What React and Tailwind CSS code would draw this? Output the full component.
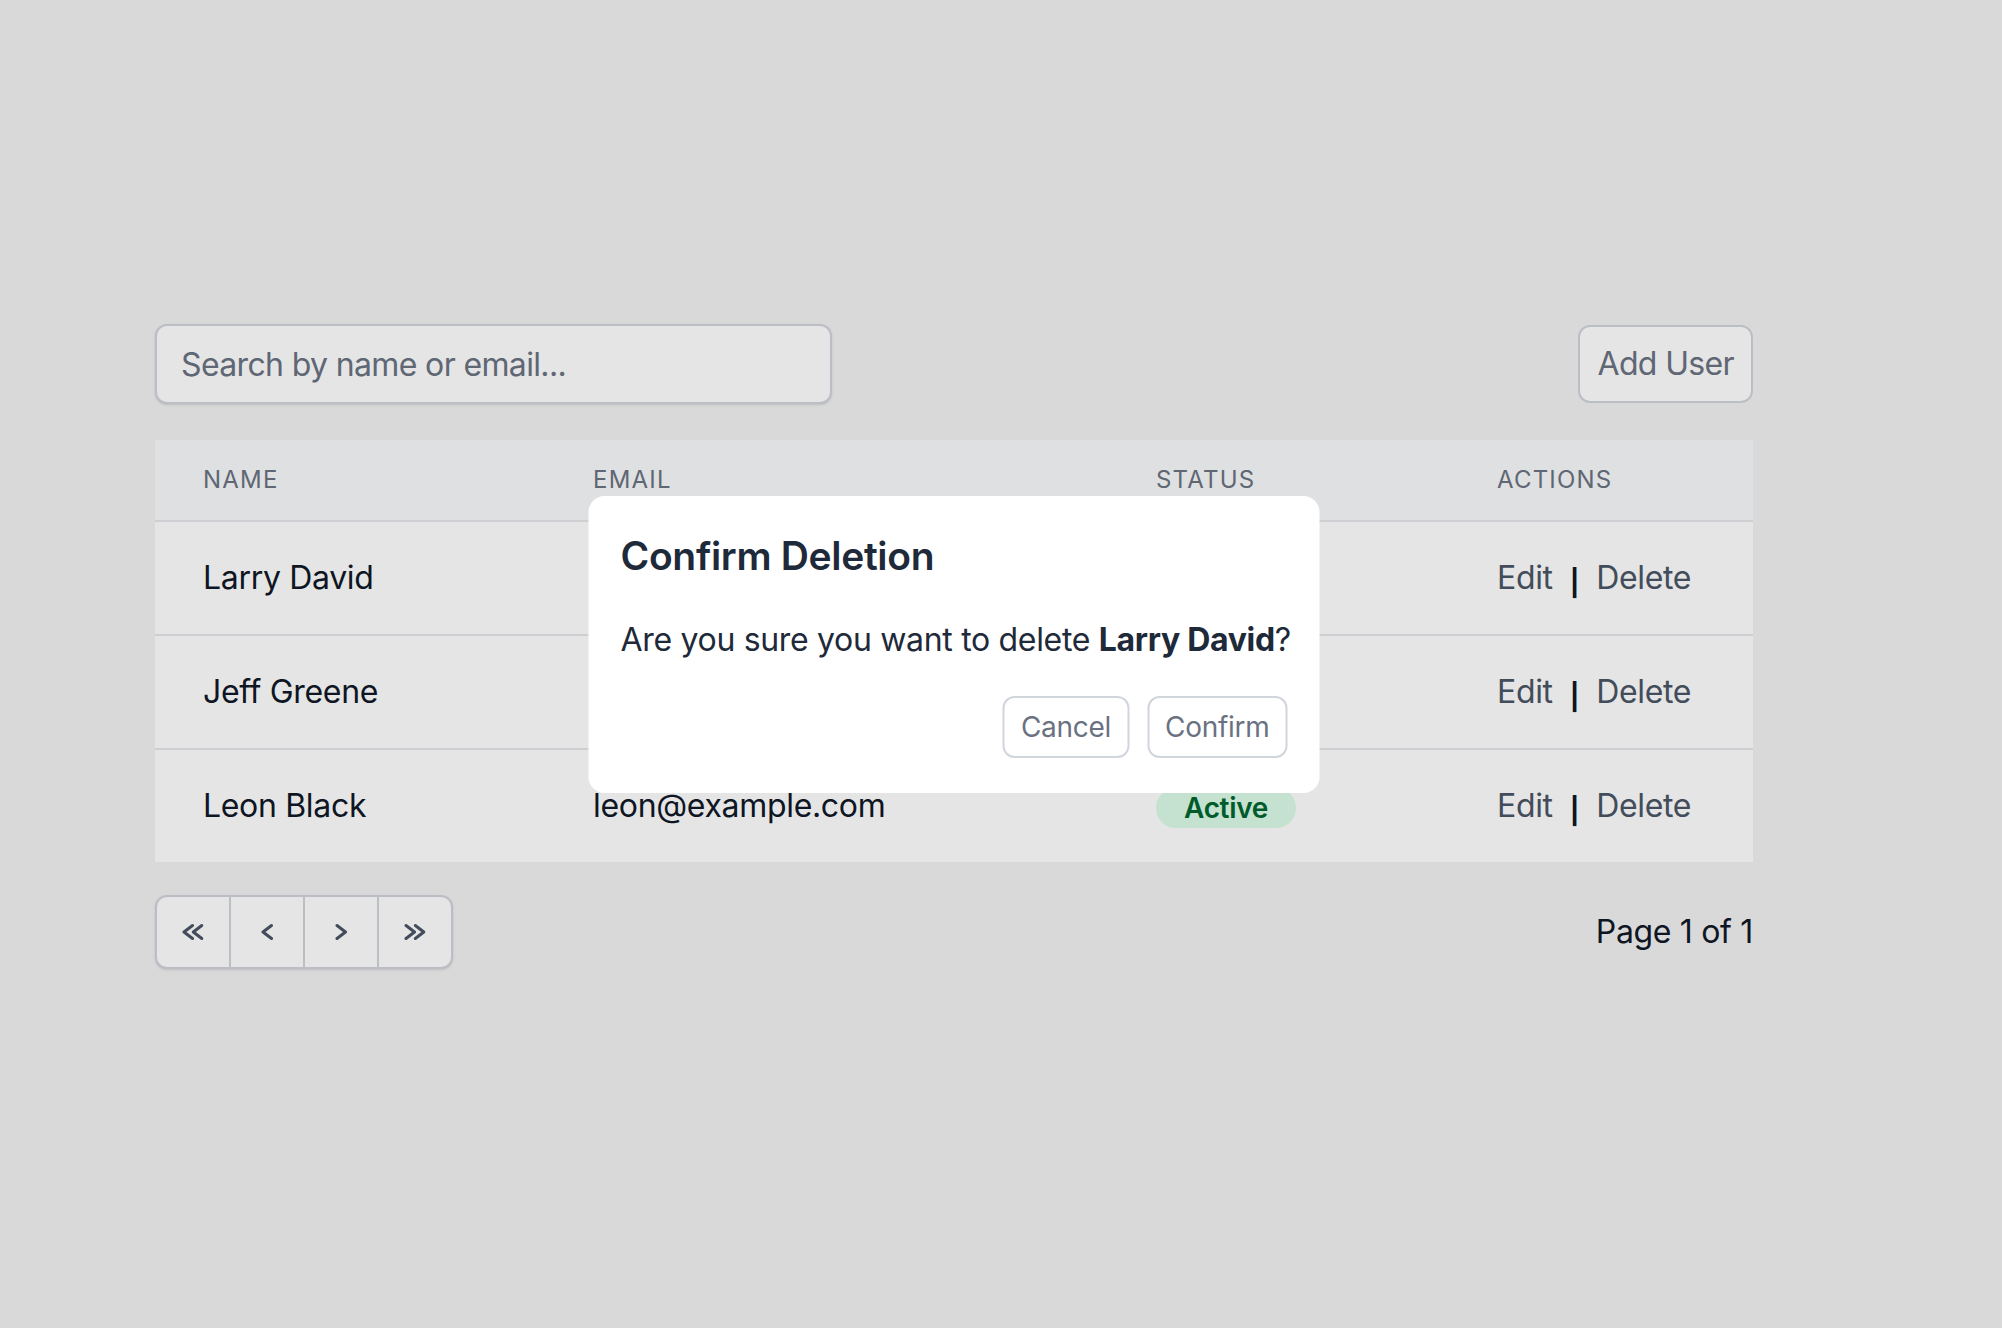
import React from "react";

function Chevron({ dir = "left", double = false }) {
  if (double) {
    const d =
      dir === "left"
        ? ["M10.5 2.5 L2 9 L10.5 15.5", "M19.8 2.5 L11.3 9 L19.8 15.5"]
        : ["M11.3 2.5 L19.8 9 L11.3 15.5", "M2 2.5 L10.5 9 L2 15.5"];
    return (
      <svg width="22" height="18" viewBox="0 0 22 18" fill="none" stroke="currentColor" strokeWidth="3" strokeLinecap="round" strokeLinejoin="round">
        <path d={d[0]} />
        <path d={d[1]} />
      </svg>
    );
  }
  const d = dir === "left" ? "M10.5 2.5 L2 9 L10.5 15.5" : "M2 2.5 L10.5 9 L2 15.5";
  return (
    <svg width="13" height="18" viewBox="0 0 13 18" fill="none" stroke="currentColor" strokeWidth="3" strokeLinecap="round" strokeLinejoin="round">
      <path d={d} />
    </svg>
  );
}

const users = [
  { name: "Larry David", email: "larry@example.com", status: "Active" },
  { name: "Jeff Greene", email: "jeff@example.com", status: "Active" },
  { name: "Leon Black", email: "leon@example.com", status: "Active" },
];

export default function App() {
  return (
    <div className="min-h-screen w-full bg-[#f2f2f2] font-['Inter',sans-serif] tracking-[-0.02em] text-gray-900">
      <div className="relative ml-[155px] w-[1598px] pt-[324px]">
        {/* toolbar */}
        <div className="mb-[36px] flex items-center justify-between">
          <input
            type="text"
            placeholder="Search by name or email..."
            className="h-[80px] w-[677px] rounded-[12px] border-2 border-gray-300 bg-white px-[24px] text-[32px] leading-[48px] tracking-[-0.02em] text-gray-900 shadow-sm outline-none placeholder:text-gray-500"
          />
          <button className="rounded-[12px] border-2 border-gray-300 bg-white px-[17px] py-[13px] text-[32px] leading-[48px] tracking-[-0.02em] text-gray-500">
            Add User
          </button>
        </div>

        {/* table */}
        <table className="w-full table-fixed border-collapse bg-white">
          <colgroup>
            <col className="w-[390px]" />
            <col className="w-[563px]" />
            <col className="w-[341px]" />
            <col className="w-[304px]" />
          </colgroup>
          <thead className="bg-gray-50">
            <tr className="border-b-2 border-gray-200">
              {["Name", "Email", "Status", "Actions"].map((h) => (
                <th
                  key={h}
                  className="px-[48px] py-[24px] text-left text-[24px] font-normal uppercase leading-[32px] tracking-wider text-gray-500"
                >
                  {h}
                </th>
              ))}
            </tr>
          </thead>
          <tbody>
            {users.map((u, i) => (
              <tr key={u.name} className={i < users.length - 1 ? "border-b-2 border-gray-200" : ""}>
                <td className="px-[48px] py-[32px] text-[32px] leading-[48px] text-gray-900">{u.name}</td>
                <td className="px-[48px] py-[32px] text-[32px] leading-[48px] text-gray-900">{u.email}</td>
                <td className="px-[48px] py-[32px] text-[32px] leading-[48px]">
                  <span className="inline-block rounded-full bg-green-100 px-[28px] align-middle text-[28px] font-semibold leading-[40px] text-green-800">
                    {u.status}
                  </span>
                </td>
                <td className="whitespace-nowrap px-[48px] py-[32px] text-[32px] leading-[48px] text-gray-600">
                  <span>Edit</span>
                  <span className="relative top-[3px] mx-[17px] text-[26px] font-bold leading-none text-gray-900">|</span>
                  <span>Delete</span>
                </td>
              </tr>
            ))}
          </tbody>
        </table>

        {/* pagination */}
        <div className="mt-[33px] flex items-center justify-between">
          <div className="flex overflow-hidden rounded-[12px] border-2 border-gray-300 bg-white text-gray-600 shadow-sm">
            <button className="flex h-[70px] w-[72px] items-center justify-center">
              <Chevron dir="left" double />
            </button>
            <button className="flex h-[70px] w-[74px] items-center justify-center border-l-2 border-gray-300">
              <Chevron dir="left" />
            </button>
            <button className="flex h-[70px] w-[74px] items-center justify-center border-l-2 border-gray-300">
              <Chevron dir="right" />
            </button>
            <button className="flex h-[70px] w-[74px] items-center justify-center border-l-2 border-gray-300">
              <Chevron dir="right" double />
            </button>
          </div>
          <span className="text-[32px] leading-[48px] text-gray-900">Page 1 of 1</span>
        </div>

        {/* overlay */}
        <div className="fixed inset-0 bg-black/10" />

        {/* modal */}
        <div className="absolute left-1/2 top-[496px] w-[731px] -translate-x-1/2 rounded-[16px] bg-white px-[32px] pb-[35px] pt-[32px]">
          <h2 className="mb-[32px] text-[39px] font-semibold leading-[56px] text-gray-800">Confirm Deletion</h2>
          <p className="whitespace-nowrap text-[32px] leading-[48px] text-gray-800">
            Are you sure you want to delete <strong className="font-bold">Larry David</strong>?
          </p>
          <div className="mt-[32px] flex justify-end gap-[18px]">
            <button className="rounded-[12px] border-2 border-gray-300 bg-white px-[16px] py-[9px] text-[28px] leading-[40px] tracking-[-0.01em] text-gray-500">
              Cancel
            </button>
            <button className="rounded-[12px] border-2 border-gray-300 bg-white px-[16px] py-[9px] text-[28px] leading-[40px] tracking-[-0.01em] text-gray-500">
              Confirm
            </button>
          </div>
        </div>
      </div>
    </div>
  );
}
